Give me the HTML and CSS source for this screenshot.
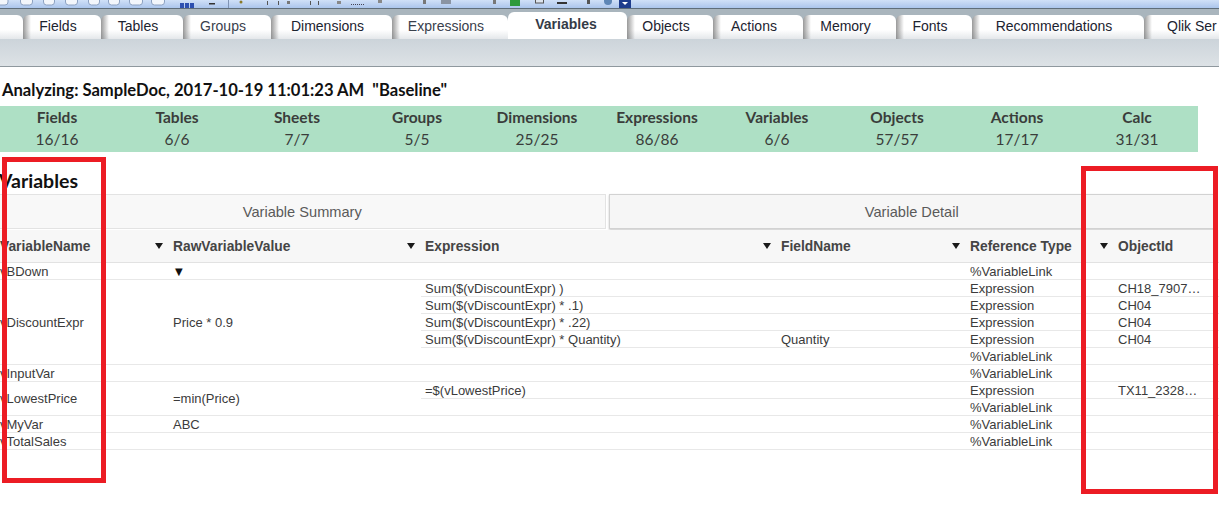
FILE: index.html
```html
<!DOCTYPE html>
<html lang="en">
<head>
<meta charset="utf-8">
<title>Document Analyzer - Variables</title>
<link rel="stylesheet" href="styles.css">
</head>
<body>
<div class="toolbar">
  <svg class="toolbar-icons" width="640" height="8" viewBox="0 0 640 8" aria-hidden="true">
    <rect x="-3" y="-6" width="11" height="11" rx="3" fill="#f3f6fb" stroke="#8da2c2"/>
    <rect x="20.5" y="-6" width="12" height="11" rx="3" fill="#f3f6fb" stroke="#8da2c2"/>
    <rect x="43.5" y="-6" width="11" height="11" rx="3" fill="#f3f6fb" stroke="#8da2c2"/>
    <rect x="65.5" y="-6" width="12" height="11" rx="3" fill="#f3f6fb" stroke="#8da2c2"/>
    <rect x="88.5" y="-6" width="11" height="11" rx="3" fill="#f3f6fb" stroke="#8da2c2"/>
    <rect x="108.5" y="-6" width="11" height="11" rx="3" fill="#f3f6fb" stroke="#8da2c2"/>
    <rect x="129.5" y="-6" width="13" height="11" rx="3" fill="#f3f6fb" stroke="#8da2c2"/>
    <rect x="151.5" y="-6" width="13" height="11" rx="3" fill="#f3f6fb" stroke="#8da2c2"/>
    <rect x="180" y="3" width="4" height="5" fill="#2c4fb0"/>
    <rect x="185" y="3" width="4" height="5" fill="#2c4fb0"/>
    <rect x="190" y="3" width="4" height="5" fill="#2c4fb0"/>
    <rect x="209" y="3" width="6" height="1.5" fill="#333"/>
    <line x1="228.5" y1="0" x2="228.5" y2="8" stroke="#7f93b3"/>
    <circle cx="241" cy="2" r="1.5" fill="#8a7a2a"/>
    <rect x="267" y="1" width="1" height="4" fill="#555"/>
    <rect x="278" y="1" width="1" height="4" fill="#555"/>
    <rect x="287" y="1" width="3" height="3" fill="#777"/>
    <rect x="310" y="1" width="1" height="4" fill="#555"/>
    <rect x="318" y="1" width="1" height="4" fill="#555"/>
    <rect x="337" y="1" width="4" height="3" fill="#888"/>
    <line x1="351" y1="4.5" x2="364" y2="4.5" stroke="#445" stroke-dasharray="1 1"/>
    <rect x="378" y="0" width="4" height="3" fill="#888"/>
    <rect x="423" y="0" width="3" height="4" fill="#777"/>
    <rect x="441" y="0" width="10" height="4" fill="#8a94a3"/>
    <rect x="493" y="0" width="3" height="4" fill="#777"/>
    <rect x="510" y="0" width="10" height="6" fill="#2e9a3c"/>
    <rect x="535.5" y="-3" width="8" height="6" fill="#dde4ee" stroke="#555"/>
    <rect x="557" y="2" width="10" height="2" fill="#333"/>
    <rect x="587" y="0" width="3" height="4" fill="#555"/>
    <circle cx="608" cy="1" r="4" fill="#5e86b6"/>
    <rect x="619" y="0" width="12" height="8" fill="#1e3c8c"/>
    <path d="M622 2 h6 l-3 3z" fill="#fff"/>
  </svg>
</div>

<nav class="tabbar">
  <div class="tab tab-edge"></div>
  <div class="tab">Fields</div>
  <div class="tab">Tables</div>
  <div class="tab">Groups</div>
  <div class="tab">Dimensions</div>
  <div class="tab">Expressions</div>
  <div class="tab tab-active">Variables</div>
  <div class="tab">Objects</div>
  <div class="tab">Actions</div>
  <div class="tab">Memory</div>
  <div class="tab">Fonts</div>
  <div class="tab">Recommendations</div>
  <div class="tab tab-last">Qlik Ser</div>
</nav>
<div class="subbar"></div>

<main class="content">
  <h1 class="analyzing">Analyzing: SampleDoc, 2017-10-19 11:01:23 AM&nbsp; "Baseline"</h1>

  <section class="stats">
    <div class="stats-grid">
      <div class="stat"><div class="stat-label">Fields</div><div class="stat-value">16/16</div></div>
      <div class="stat"><div class="stat-label">Tables</div><div class="stat-value">6/6</div></div>
      <div class="stat"><div class="stat-label">Sheets</div><div class="stat-value">7/7</div></div>
      <div class="stat"><div class="stat-label">Groups</div><div class="stat-value">5/5</div></div>
      <div class="stat"><div class="stat-label">Dimensions</div><div class="stat-value">25/25</div></div>
      <div class="stat"><div class="stat-label">Expressions</div><div class="stat-value">86/86</div></div>
      <div class="stat"><div class="stat-label">Variables</div><div class="stat-value">6/6</div></div>
      <div class="stat"><div class="stat-label">Objects</div><div class="stat-value">57/57</div></div>
      <div class="stat"><div class="stat-label">Actions</div><div class="stat-value">17/17</div></div>
      <div class="stat"><div class="stat-label">Calc</div><div class="stat-value">31/31</div></div>
    </div>
  </section>

  <h2 class="section-title">Variables</h2>

  <div class="viewtabs">
    <div class="vt">Variable Summary</div>
    <div class="vt vt-active">Variable Detail</div>
  </div>

  <div class="vtable">
    <div class="th"><span>VariableName</span><i class="sort"></i></div>
    <div class="th"><span>RawVariableValue</span><i class="sort"></i></div>
    <div class="th"><span>Expression</span><i class="sort"></i></div>
    <div class="th"><span>FieldName</span><i class="sort"></i></div>
    <div class="th"><span>Reference Type</span><i class="sort"></i></div>
    <div class="th"><span>ObjectId</span><i class="sort"></i></div>

    <div class="td">vBDown</div>
    <div class="td"><span class="tri">▼</span></div>
    <div class="td"></div>
    <div class="td"></div>
    <div class="td">%VariableLink</div>
    <div class="td"></div>

    <div class="td span5">vDiscountExpr</div>
    <div class="td span5">Price * 0.9</div>
    <div class="td">Sum($(vDiscountExpr) )</div>
    <div class="td"></div>
    <div class="td">Expression</div>
    <div class="td">CH18_7907…</div>
    <div class="td">Sum($(vDiscountExpr) * .1)</div>
    <div class="td"></div>
    <div class="td">Expression</div>
    <div class="td">CH04</div>
    <div class="td">Sum($(vDiscountExpr) * .22)</div>
    <div class="td"></div>
    <div class="td">Expression</div>
    <div class="td">CH04</div>
    <div class="td">Sum($(vDiscountExpr) * Quantity)</div>
    <div class="td">Quantity</div>
    <div class="td">Expression</div>
    <div class="td">CH04</div>
    <div class="td"></div>
    <div class="td"></div>
    <div class="td">%VariableLink</div>
    <div class="td"></div>

    <div class="td">vInputVar</div>
    <div class="td"></div>
    <div class="td"></div>
    <div class="td"></div>
    <div class="td">%VariableLink</div>
    <div class="td"></div>

    <div class="td span2">vLowestPrice</div>
    <div class="td span2">=min(Price)</div>
    <div class="td">=$(vLowestPrice)</div>
    <div class="td"></div>
    <div class="td">Expression</div>
    <div class="td">TX11_2328…</div>
    <div class="td"></div>
    <div class="td"></div>
    <div class="td">%VariableLink</div>
    <div class="td"></div>

    <div class="td">vMyVar</div>
    <div class="td">ABC</div>
    <div class="td"></div>
    <div class="td"></div>
    <div class="td">%VariableLink</div>
    <div class="td"></div>

    <div class="td">vTotalSales</div>
    <div class="td"></div>
    <div class="td"></div>
    <div class="td"></div>
    <div class="td">%VariableLink</div>
    <div class="td"></div>
  </div>
</main>

<div class="annot annot-left"></div>
<div class="annot annot-right"></div>
</body>
</html>
```

FILE: styles.css
```css
* { box-sizing: border-box; }

html, body {
  margin: 0;
  padding: 0;
  background: #fff;
}

body {
  position: relative;
  width: 1219px;
  height: 510px;
  overflow: hidden;
  font-family: "Liberation Sans", Arial, sans-serif;
}

/* ---------- top toolbar ---------- */
.toolbar {
  height: 9px;
  background: linear-gradient(#d0e0f7, #abc5ec);
  border-bottom: 1px solid #5f6d79;
  overflow: hidden;
}
.toolbar-icons { display: block; }

/* ---------- main tab strip ---------- */
.tabbar {
  height: 30px;
  background: #a9b5bd;
  display: flex;
  align-items: flex-end;
  overflow: hidden;
}

.tab {
  flex: none;
  height: 24px;
  display: flex;
  align-items: center;
  justify-content: center;
  padding-right: 8px;
  padding-bottom: 2px;
  font-size: 14px;
  color: #1c2330;
  white-space: nowrap;
  border-radius: 6px 6px 0 0;
  background:
    linear-gradient(to right, rgba(70, 70, 70, 0.55), rgba(255, 255, 255, 0) 8px),
    linear-gradient(#fff 62%, #e4e7ea);
}

.tab:nth-child(1)  { width: 23px; border-radius: 0 6px 0 0; background: linear-gradient(#fff 62%, #e4e7ea); }
.tab:nth-child(2)  { width: 78px; }
.tab:nth-child(3)  { width: 82px; }
.tab:nth-child(4)  { width: 88px; color: #39404c; }
.tab:nth-child(5)  { width: 121px; }
.tab:nth-child(6)  { width: 116px; color: #39404c; }
.tab:nth-child(7)  { width: 119px; }
.tab:nth-child(8)  { width: 86px; }
.tab:nth-child(9)  { width: 90px; }
.tab:nth-child(10) { width: 93px; }
.tab:nth-child(11) { width: 76px; }
.tab:nth-child(12) { width: 172px; }

.tab-active {
  height: 27px;
  background: #fff;
  font-weight: bold;
  color: #343b47;
  padding-right: 3px;
  padding-bottom: 4px;
}

.tab-last {
  width: 75px;
  justify-content: flex-start;
  padding-left: 23px;
  padding-right: 0;
  border-radius: 6px 0 0 0;
}

.subbar {
  height: 28px;
  background: linear-gradient(#ccd4da, #dde2e6);
  border-bottom: 1px solid #8f989e;
}

/* ---------- content ---------- */
.content { width: 1219px; }

.analyzing {
  margin: 13px 0 6px 2px;
  font-family: Lato, "Open Sans", sans-serif;
  font-weight: bold;
  font-size: 16.6px;
  line-height: 20px;
  color: #111;
  white-space: pre;
}

.stats {
  width: 1198px;
  height: 46px;
  background: #aee0c5;
  padding-top: 1px;
}

.stats-grid {
  display: grid;
  grid-template-columns: repeat(10, 120px);
  margin-left: -3px;
}

.stat {
  text-align: center;
  font-family: Lato, "Open Sans", sans-serif;
  color: #3a3d3b;
}
.stat-label {
  font-weight: bold;
  font-size: 15.5px;
  line-height: 21px;
}
.stat-value {
  font-size: 15.5px;
  line-height: 22px;
}

.section-title {
  margin: 17px 0 1px -1px;
  font-family: Lato, "Open Sans", sans-serif;
  font-weight: bold;
  font-size: 19.5px;
  line-height: 24px;
  color: #111;
}

.viewtabs {
  display: grid;
  grid-template-columns: 1fr 1fr;
  gap: 3px;
  width: 1216px;
  height: 35px;
  margin: 0 0 1px -1px;
}

.vt {
  display: flex;
  align-items: center;
  justify-content: center;
  background: #f8f8f8;
  border: 1px solid #e3e3e3;
  font-size: 14.6px;
  color: #5a5a5a;
}
.vt-active {
  background: #f6f6f6;
  border-color: #d2d2d2;
  box-shadow: 0 1px 2px rgba(0, 0, 0, 0.22);
}

/* ---------- variable table ---------- */
.vtable {
  display: grid;
  grid-template-columns: 173px 252px 356px 189px 148px 200px;
  grid-template-rows: 33px;
  grid-auto-rows: 17px;
  margin-left: -4px;
  width: 1318px;
}

.th {
  display: flex;
  align-items: center;
  justify-content: space-between;
  padding: 0 6px 0 4px;
  background: #f7f7f7;
  border-bottom: 1px solid #e2e2e2;
  font-weight: bold;
  font-size: 13.8px;
  color: #454545;
  white-space: nowrap;
}

.sort {
  display: block;
  width: 0;
  height: 0;
  border-left: 4px solid transparent;
  border-right: 4px solid transparent;
  border-top: 6px solid #1a1a1a;
}

.th:last-child .sort { display: none; }

.td {
  display: flex;
  align-items: center;
  padding: 0 4px;
  border-bottom: 1px solid #e8e8e8;
  font-size: 13px;
  color: #3b3b3b;
  white-space: nowrap;
  overflow: hidden;
}

.span5 { grid-row: span 5; }
.span2 { grid-row: span 2; }

.tri {
  font-family: "DejaVu Sans", sans-serif;
  font-size: 10px;
  color: #111;
  margin-left: 2px;
}

/* ---------- red annotation boxes (overlay) ---------- */
.annot {
  position: absolute;
  border: 5px solid #ec1c24;
  pointer-events: none;
}
.annot-left {
  left: 2px;
  top: 157px;
  width: 104px;
  height: 326px;
}
.annot-right {
  left: 1081px;
  top: 166px;
  width: 137px;
  height: 328px;
}
```
